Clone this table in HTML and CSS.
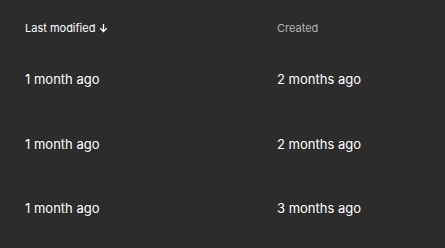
FILE: index.html
```html
<!DOCTYPE html>
<html>
<head>
<meta charset="utf-8">
<link rel="stylesheet" href="styles.css">
</head>
<body>
<div class="table">
  <div class="row head">
    <div class="cell active">Last modified <span class="arrow"><svg width="9" height="10" viewBox="0 0 9 10"><path d="M4.5 1v7.5M1.3 5.3l3.2 3.2 3.2-3.2" fill="none" stroke="currentColor" stroke-width="1.3"/></svg></span></div>
    <div class="cell muted">Created</div>
  </div>
  <div class="row"><div class="cell">1 month ago</div><div class="cell">2 months ago</div></div>
  <div class="row"><div class="cell">1 month ago</div><div class="cell">2 months ago</div></div>
  <div class="row"><div class="cell">1 month ago</div><div class="cell">3 months ago</div></div>
</div>
</body>
</html>
```
FILE: styles.css
```css
html, body { margin: 0; padding: 0; }
body {
  background: #2c2c2c;
  width: 445px;
  height: 248px;
  overflow: hidden;
  font-family: Inter, "Noto Sans", sans-serif;
  color: #ffffff;
}
.table { padding: 0 0 0 25px; }
.row {
  display: grid;
  grid-template-columns: 252px 1fr;
  height: 64.5px;
  align-items: center;
  font-size: 13px;
  box-sizing: border-box;
}
.row.head {
  height: 47px;
  padding-top: 10px;
  padding-bottom: 1px;
  font-size: 11px;
}
.active { color: #ffffff; display: flex; align-items: center; gap: 4px; }
.arrow { display: inline-flex; }
.muted { color: #b3b3b3; }
```
